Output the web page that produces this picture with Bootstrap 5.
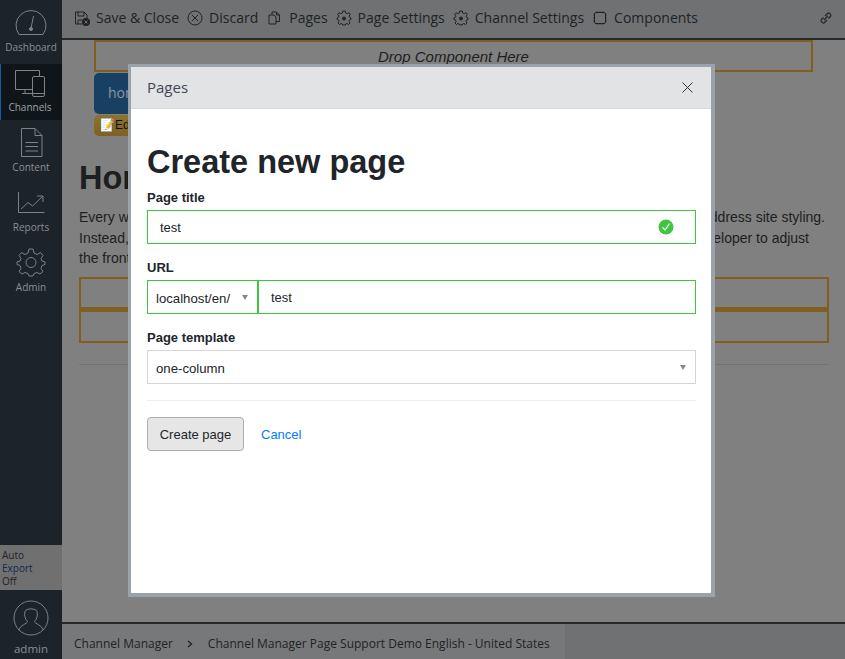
<!DOCTYPE html>
<html lang="en">
<head>
<meta charset="utf-8">
<title>Pages</title>
<link href="https://cdn.jsdelivr.net/npm/bootstrap@5.3.0/dist/css/bootstrap.min.css" rel="stylesheet">
<style>
html,body{height:100%;margin:0;overflow:hidden}
body{background:#808080;font-family:"Open Sans",sans-serif;color:#212529}
.app-shell{height:659px;position:relative}
.side-rail{width:62px;background:#1c2329;flex:none}
.rail-item{height:60px;color:#8a9094;font-size:10px;line-height:14px;text-align:center;padding-bottom:6px;display:flex;flex-direction:column;justify-content:flex-end;align-items:center}
.rail-item svg{display:block;flex:none}
.rail-first{height:64px;padding-bottom:10px}
.rail-first svg{margin-bottom:5px}
.rail-active{background:#10151a;border-left:1px solid #1657a8;color:#9ea3a6;height:56px;padding-right:3px}
.rail-gap3 svg{margin-bottom:3px}
.rail-gap7 svg{margin-bottom:7px}
.rail-stroke{fill:none;stroke:#7d8387;stroke-width:1}
.auto-box{background:#707070;height:45px;font-size:10px;line-height:13px;padding:4px 2px;color:#1f2226}
.auto-box span{color:#102a4a}
.user-box{height:69px;color:#8a9094;font-size:11.500px;padding-top:10px;text-align:center}
.tool-bar{height:40px;background:#6f7173;border-bottom:2px solid #26292c;font-size:14px;color:#202326;padding:0 12px 3px}
.tool-item{gap:6px;margin-right:8px;white-space:nowrap}
.tool-wide{margin-right:9px}
.tool-svg{fill:none;stroke:#202326;stroke-width:1}
.page-area{font-family:"Liberation Sans",sans-serif;color:#1c1e20;overflow:hidden}
.drop-zone{margin:0 32px;height:32px;border:2px solid #7f6020;text-align:center;font-style:italic;font-size:15px;line-height:30px;color:#1c1e20}
.home-tab{margin-left:32px;margin-top:1px;width:70px;height:41px;background:#184063;border-radius:5px;color:#8c97a2;font-family:"Open Sans",sans-serif;font-size:14px;line-height:40px;padding-left:14px}
.edit-chip{margin-left:32px;width:70px;height:21px;background:linear-gradient(#8a7430,#7f6020);border-radius:5px;font-size:12px;padding-left:6px;line-height:20px;color:#111;margin-top:1px}
.page-head{font-size:32.500px;font-weight:700;margin:20px 0 0 17px;line-height:44px;color:#1c1e20}
.copy-block{margin:7px 20px 0 17px;font-size:14px;line-height:20.500px}
.copy-short{margin-right:16px}
.slot-box{height:33px;margin:0 16px 0 17px;border:2px solid #7f6020}
.slot-first{margin-top:8px;border-bottom-width:3px}
.page-rule{margin:21px 16px 0 17px;border-top:1px solid #737373}
.crumb-bar{height:37px;background:#6f7173;border-top:2px solid #26292c;font-size:12px;color:#202326;flex:none}
.crumb-path{width:503px;background:#777879;padding:4px 12px 0;gap:14.500px}
.dlg{position:absolute;left:128px;top:64px;width:587px;height:533px;border:3px solid #9aa3aa;border-right-width:4px;border-bottom-width:4px;background:#fff;font-family:"Liberation Sans",sans-serif}
.dlg-head{height:42px;background:#e1e3e5;border-bottom:1px solid #d9d9d9;font-family:"Open Sans",sans-serif;font-size:15px;color:#3f4a55;padding:0 18px 0 16px}
.dlg-body{padding:34px 15px 0 16px}
.dlg-title{font-family:"Liberation Sans",sans-serif;font-size:32.500px;font-weight:700;line-height:38px;margin:0 0 8px;color:#212529}
.fld-label{font-size:13px;font-weight:700;line-height:18px;margin:0 0 3px;display:block;color:#212529}
.fld-gap{margin-top:15px}
.fld-input{height:34px;border-radius:0;font-size:13px;padding:0 12px;color:#212529;box-shadow:none}
.is-good{border:1px solid #3ec63e}
.fld-wrap{position:relative}
.ok-dot{position:absolute;right:22px;top:9px}
.fld-select{height:34px;border-radius:0;font-size:13.200px;padding:3px 8px 0;color:#212529;border:1px solid #d5d5d5;background-image:none}
.sel-wrap{position:relative}
.sel-wrap::after{content:"";position:absolute;right:10px;top:15px;border-left:3.500px solid transparent;border-right:3.500px solid transparent;border-top:5px solid #888}
.url-host{width:111px;flex:none}
.url-host .fld-select{border-color:#3ec63e}
.url-path{flex:1;margin-left:0}
.dlg-rule{border:0;border-top:1px solid #eee;margin:16px 0;opacity:1}
.make-btn{height:34px;width:97px;background:#e6e6e6;border:1px solid #adadad;font-size:13px;color:#212529;padding:1px 0 0;border-radius:4px}
.drop-link{color:#007bff;font-size:13px;text-decoration:none;margin-left:17px;padding-top:2px}
.x-btn{display:block}
</style>
</head>
<body>
<div class="app-shell d-flex">
  <aside class="side-rail d-flex flex-column">
    <div class="rail-item rail-first">
      <svg width="32" height="25" viewBox="0 0 32 25" class="rail-stroke"><path d="M4 24.500H28A15 15 0 1 0 4 24.500Z" stroke-linejoin="round"/><path d="M16 18.500 18.500 6"/><circle cx="16" cy="19" r="1.500" fill="#7d8387"/></svg>
      <div>Dashboard</div>
    </div>
    <div class="rail-item rail-active rail-gap3">
      <svg width="32" height="27" viewBox="0 0 32 27" class="rail-stroke"><path d="M25.500 6V.5H1.500V19.500H18.500M11 19.500V23M8 23.500H18.500"/><rect x="18.500" y="6.500" width="12" height="20" rx="1.500"/><path d="M18.500 23.500H30.500"/></svg>
      <div>Channels</div>
    </div>
    <div class="rail-item rail-gap3">
      <svg width="23" height="29" viewBox="0 0 23 29" class="rail-stroke"><path d="M1.500.5H15L22 7.500V28.500H1.500ZM15 .5V7.500H22M5.500 14.500H18M5.500 18.500H18M5.500 23H18"/></svg>
      <div>Content</div>
    </div>
    <div class="rail-item rail-gap7">
      <svg width="28" height="21" viewBox="0 0 28 21" class="rail-stroke"><path d="M1.500 0V20.500H27.500M4 17 11 10.500 15.500 14 25.500 4.500M20 4H26V10"/></svg>
      <div>Reports</div>
    </div>
    <div class="rail-item rail-gap3">
      <svg width="30" height="29" viewBox="0 0 30 29" class="rail-stroke"><circle cx="15" cy="14.500" r="5"/><path d="M13 1H17L18 5 21 6.500 24.500 4.500 27 7.500 25 10.500 26 13 29 14V16.500L26 17.500 25 20.500 27 23.500 24 26 21 24.500 18 25.500 17 28H13L12 25.500 9 24.500 6 26 3 23.500 5 20.500 4 17.500 1 16.500V14L4 13 5 10.500 3 7.500 5.500 4.500 9 6.500 12 5Z" stroke-linejoin="round"/></svg>
      <div>Admin</div>
    </div>
    <div class="flex-grow-1"></div>
    <div class="auto-box">Auto<br><span>Export</span><br>Off</div>
    <div class="user-box">
      <svg width="36" height="36" viewBox="0 0 36 36" class="rail-stroke d-block mx-auto"><circle cx="18" cy="18" r="17"/><path d="M6 30C7 25 14 24 14.500 21.500 12 19 11 15 12 11.500 13 8 23 8 24 11.500 25 15 24 19 21.500 21.500 22 24 29 25 30 30"/></svg>
      <div style="margin-top:4px">admin</div>
    </div>
  </aside>
  <div class="d-flex flex-column flex-grow-1" style="min-width:0">
    <div class="tool-bar d-flex align-items-center">
      <span class="d-flex align-items-center tool-item"><svg width="16" height="16" viewBox="0 0 16 16" class="tool-svg"><path d="M1.500 2H10L13 5V8M1.500 2V14H8M4 2V6H10V2M4 14V10H8"/><circle cx="12" cy="12" r="3.700" fill="#202326"/><path d="M10.500 10.500 13.500 13.500M13.500 10.500 10.500 13.500" stroke="#6f7173"/></svg>Save &amp; Close</span>
      <span class="d-flex align-items-center tool-item tool-wide"><svg width="16" height="16" viewBox="0 0 16 16" class="tool-svg"><circle cx="8" cy="8" r="7"/><path d="M4.800 4.800 11.200 11.200M11.200 4.800 4.800 11.200"/></svg>Discard</span>
      <span class="d-flex align-items-center tool-item"><svg width="16" height="16" viewBox="0 0 16 16" class="tool-svg"><path d="M5 4.500V2H9.500L12.500 5V11.500H9M2 5H7L9 7V14H2ZM9.500 2V5H12.500"/></svg>Pages</span>
      <span class="d-flex align-items-center tool-item"><svg width="16" height="16" viewBox="0 0 16 16" class="tool-svg"><path d="M6.800 1H9.200L9.700 3 11.300 3.700 13.100 2.700 14.400 4.400 13.100 6 13.500 7.300 15 8V9.500L13.500 10 13 11.500 14 13 12.500 14.500 11 13.500 9.700 14 9.200 15H6.800L6.300 14 5 13.500 3.500 14.500 2 13 3 11.500 2.500 10 1 9.500V8L2.500 7.300 3 6 1.600 4.400 3 2.700 4.700 3.700 6.300 3Z"/><circle cx="8" cy="8.500" r="1.500" fill="#202326"/></svg>Page Settings</span>
      <span class="d-flex align-items-center tool-item"><svg width="16" height="16" viewBox="0 0 16 16" class="tool-svg"><path d="M6.800 1H9.200L9.700 3 11.300 3.700 13.100 2.700 14.400 4.400 13.100 6 13.500 7.300 15 8V9.500L13.500 10 13 11.500 14 13 12.500 14.500 11 13.500 9.700 14 9.200 15H6.800L6.300 14 5 13.500 3.500 14.500 2 13 3 11.500 2.500 10 1 9.500V8L2.500 7.300 3 6 1.600 4.400 3 2.700 4.700 3.700 6.300 3Z"/><circle cx="8" cy="8.500" r="1.500" fill="#202326"/></svg>Channel Settings</span>
      <span class="d-flex align-items-center tool-item"><svg width="16" height="16" viewBox="0 0 16 16" class="tool-svg"><rect x="2.500" y="2.500" width="11" height="11" rx="1.500"/><path d="M5 1V3M8 1V3M11 1V3M5 13V15M8 13V15M11 13V15M1 5H3M1 8H3M1 11H3M13 5H15M13 8H15M13 11H15" stroke-width=".7"/></svg>Components</span>
      <svg class="ms-auto" width="14" height="14" viewBox="0 0 14 14" fill="none" stroke="#26292c" stroke-width="1.300"><path d="M6 5 8.500 2.500C10 1 13 4 11.500 5.500L9.500 7.500M8 9 5.500 11.500C4 13 1 10 2.500 8.500L4.500 6.500M5 9 9 5"/></svg>
    </div>
    <div class="page-area flex-grow-1">
      <div class="drop-zone">Drop Component Here</div>
      <div class="home-tab">home</div>
      <div class="edit-chip">📝Edit</div>
      <div class="page-head">Home</div>
      <div class="copy-block">
        <div class="d-flex justify-content-between"><span>Every website</span><span>address site styling.</span></div>
        <div class="d-flex justify-content-between copy-short"><span>Instead,</span><span>developer to adjust</span></div>
        <div>the front end</div>
      </div>
      <div class="slot-box slot-first"></div>
      <div class="slot-box"></div>
      <div class="page-rule"></div>
    </div>
    <div class="crumb-bar d-flex">
      <div class="crumb-path d-flex align-items-center">
        <span>Channel Manager</span>
        <svg width="6" height="8" viewBox="0 0 6 8" fill="none" stroke="#202326" stroke-width="1.300"><path d="M1 1 4.500 4 1 7"/></svg>
        <span>Channel Manager Page Support Demo English - United States</span>
      </div>
    </div>
  </div>

  <div class="dlg">
    <div class="dlg-head d-flex align-items-center justify-content-between">
      <span>Pages</span>
      <svg class="x-btn" width="11" height="11" viewBox="0 0 11 11" fill="none" stroke="#33383d" stroke-width="1"><path d="M.5.5 10.500 10.500M10.500.5.500 10.500"/></svg>
    </div>
    <div class="dlg-body">
      <h1 class="dlg-title">Create new page</h1>
      <form>
        <label class="fld-label">Page title</label>
        <div class="fld-wrap">
          <input class="form-control fld-input is-good" value="test">
          <svg class="ok-dot" width="16" height="16" viewBox="0 0 16 16"><circle cx="8" cy="8" r="7.500" fill="#3ec63e"/><path d="M4.500 8.300 7 11 11.500 4.500" fill="none" stroke="#fff" stroke-width="1.200"/></svg>
        </div>
        <label class="fld-label fld-gap">URL</label>
        <div class="d-flex">
          <div class="sel-wrap url-host"><select class="form-select fld-select"><option>localhost/en/</option></select></div>
          <input class="form-control fld-input is-good url-path" value="test">
        </div>
        <label class="fld-label fld-gap">Page template</label>
        <div class="sel-wrap"><select class="form-select fld-select"><option>one-column</option></select></div>
        <hr class="dlg-rule">
        <div class="d-flex align-items-center">
          <button type="button" class="btn make-btn">Create page</button>
          <a href="#" class="drop-link">Cancel</a>
        </div>
      </form>
    </div>
  </div>
</div>
</body>
</html>
